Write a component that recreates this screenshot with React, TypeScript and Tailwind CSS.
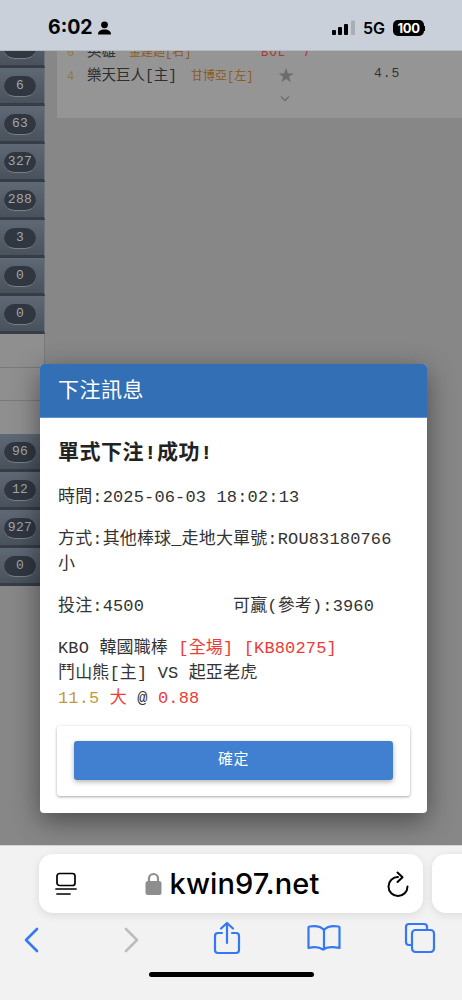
const mono = "font-['Liberation_Mono','Noto_Sans_CJK_TC',monospace]";

function Pill({ n }: { n: string }) {
  return (
    <div className="h-[38px] w-[45px] border-b-[3px] border-r border-b-[#363d46] border-r-[#6d747c] bg-gradient-to-b from-[#5f6975] to-[#49515c] pl-1 pt-2">
      <div className="flex h-[21px] w-8 items-center justify-center rounded-full border-b border-[#7b7f80] bg-[#303741] text-[13px] tracking-[0.3px] text-[#a2a6aa]">
        {n}
      </div>
    </div>
  );
}

function Signal() {
  return (
    <svg width="24" height="16" viewBox="0 0 24 16" className="-mr-px">
      <rect x="0" y="10" width="4" height="5" rx="1" fill="#000" />
      <rect x="6" y="7" width="4" height="8" rx="1" fill="#000" />
      <rect x="12" y="4" width="4" height="11" rx="1" fill="#000" />
      <rect x="19" y="0.5" width="4" height="14.5" rx="1" fill="#a9aeb5" />
    </svg>
  );
}

export default function App() {
  return (
    <div className={`relative h-[1000px] w-[462px] overflow-hidden bg-[#878787] ${mono}`}>
      <header className="relative z-10 flex h-[51px] items-center justify-between border-b border-[#b4b9bf] bg-[#c9d0d9] pl-[48px] pr-[37px] pt-[6px] font-['Inter',sans-serif] text-black">
        <div className="flex items-center gap-[5px]">
          <span className="text-[19.5px] font-bold leading-none">6:02</span>
          <svg width="13" height="14" viewBox="0 0 13 14" fill="#000">
            <circle cx="6.5" cy="3.8" r="3.4" />
            <path d="M0 13.5c0-3.4 2.6-5 6.5-5s6.5 1.6 6.5 5z" />
          </svg>
        </div>
        <div className="flex items-center gap-[8px]">
          <Signal />
          <span className="text-[16px] font-semibold leading-none">5G</span>
          <div className="flex items-center">
            <div className="flex h-[16px] w-[31px] items-center justify-center rounded-[5px] bg-black text-[13px] font-bold leading-none tracking-[-0.3px] text-white">100</div>
            <div className="h-[5px] w-[1px] bg-black" />
          </div>
        </div>
      </header>

      <main className="flex h-[794px] overflow-hidden">
        <aside className="-mt-[21px] w-[46px] shrink-0">
          {["14", "6", "63", "327", "288", "3", "0", "0"].map((n, i) => (
            <Pill key={i} n={n} />
          ))}
          <div className="h-[34px] w-[45px] border-b border-r border-[#7a7a7a] bg-[#8f8f8f]" />
          <div className="h-[33px] w-[45px] border-b border-r border-[#7a7a7a] bg-[#8f8f8f]" />
          <div className="h-[33px] w-[45px] border-r border-[#7a7a7a] bg-[#8f8f8f]" />
          {["96", "12", "927", "0"].map((n, i) => (
            <Pill key={i} n={n} />
          ))}
        </aside>
        <section className="ml-[11px] h-[67px] flex-1 bg-[#959595] pl-[10px] text-[14.5px] text-[#333]">
          <div className="-mt-[7px] flex h-[17px] items-center">
            <span className="w-[20px] text-[12px] text-[#8d7a3c]">0</span>
            <span className="w-[42px] whitespace-nowrap">英雄</span>
            <span className="w-[132px] whitespace-nowrap text-[12px] text-[#8c5a22]">金建廻[右]</span>
            <span className="whitespace-pre text-[12px] tracking-[1.2px] text-[#a33a36]">BOL  7</span>
          </div>
          <div className="mt-[4px] flex h-[23px] items-center">
            <span className="w-[20px] text-[12px] text-[#8d7a3c]">4</span>
            <span className="w-[104px] whitespace-nowrap text-[#2e2e2e]">樂天巨人[主]</span>
            <span className="w-[87px] whitespace-nowrap text-[12px] text-[#8c5a22]">甘博亞[左]</span>
            <span className="w-[96px] text-[16px] leading-none text-[#6c6c6c]">★</span>
            <span className="-mt-[5px] text-[13px] tracking-[1px] text-[#333]">4.5</span>
          </div>
          <div className="ml-[212px] mt-[7px]">
            <svg width="12" height="8" viewBox="0 0 12 8" fill="none" stroke="#6c6c6c" strokeWidth="1.3">
              <path d="M2 1.5l4 4 4-4" />
            </svg>
          </div>
        </section>
      </main>

      <div className="absolute left-[40px] top-[364px] h-[449px] w-[387px] overflow-hidden rounded-[4px] bg-white shadow-[0_8px_28px_rgba(0,0,0,0.45)]">
        <div className="flex h-[54px] items-center border-b border-[#5f93d4] bg-[#336fb4] pl-[18px] pt-[2px] text-[21px] tracking-[0.5px] text-white">下注訊息</div>
        <div className="px-[18px] pt-[21px] text-[17px] leading-[25px] tracking-[0.15px] text-[#333]">
          <div className="text-[21px] font-bold leading-[30px] tracking-[0.5px] text-[#222]">單式下注!成功!</div>
          <div className="mt-[16px]">時間:2025-06-03 18:02:13</div>
          <div className="mt-[17px] whitespace-pre-wrap">方式:其他棒球_走地大單號:ROU83180766<br />小</div>
          <div className="mt-[17px] flex">
            <span className="w-[175px]">投注:4500</span>
            <span>可贏(參考):3960</span>
          </div>
          <div className="mt-[17px] whitespace-nowrap">KBO 韓國職棒 <span className="text-[#ef3b36]">[全場] [KB80275]</span></div>
          <div className="whitespace-nowrap">鬥山熊[主] VS 起亞老虎</div>
          <div className="whitespace-nowrap">
            <span className="text-[#c19a3f]">11.5</span> <span className="text-[#ef3b36]">大</span> @ <span className="text-[#ef3b36]">0.88</span>
          </div>
          <div className="-mx-px mt-[15px] rounded-[3px] bg-white px-[17px] pb-[16px] pt-[15px] shadow-[0_1px_3px_rgba(0,0,0,0.35)]">
            <button className="flex h-[39px] w-full items-center justify-center rounded-[3px] bg-[#4180d0] pb-[2px] font-['Roboto','Noto_Sans_CJK_TC',sans-serif] text-[15px] tracking-[0.5px] text-white shadow-[0_2px_5px_rgba(0,0,0,0.3)]">確定</button>
          </div>
        </div>
      </div>

      <footer className="h-[155px] border-t border-[#d5d5d5] bg-[#f2f2f2] font-['Inter',sans-serif]">
        <div className="flex gap-[9px] pl-[39px] pt-[8px]">
          <div className="flex h-[59px] w-[384px] shrink-0 items-center rounded-[14px] bg-white pl-[16px] pr-[14px] shadow-[0_2px_8px_rgba(0,0,0,0.1)]">
            <svg width="22" height="24" viewBox="0 0 22 24" fill="none" stroke="#000" strokeWidth="1.7" strokeLinecap="round">
              <rect x="2" y="1.5" width="18" height="12" rx="2.5" />
              <path d="M1 17h20M2 22h13" />
            </svg>
            <div className="flex flex-1 items-center justify-center gap-[8px]">
              <svg width="17" height="23" viewBox="0 0 17 23" fill="none">
                <path d="M4 10V6.5a4.5 4.5 0 0 1 9 0V10" stroke="#8e8e8e" strokeWidth="2.2" />
                <rect x="0.5" y="9" width="16" height="14" rx="2.5" fill="#8e8e8e" />
              </svg>
              <span className="text-[29px] font-medium leading-none tracking-[0.1px] text-black">kwin97.net</span>
            </div>
            <svg width="22" height="26" viewBox="0 0 22 26" fill="none" stroke="#000" strokeWidth="2" strokeLinecap="round" strokeLinejoin="round">
              <path d="M11 6A9.5 9.5 0 1 0 20.5 15.5" />
              <path d="M10.5 1.5l5 4.7-5 4.8" />
            </svg>
          </div>
          <div className="h-[59px] w-[60px] shrink-0 rounded-[14px] bg-white shadow-[0_2px_8px_rgba(0,0,0,0.1)]" />
        </div>
        <nav className="relative mt-[8px] flex items-start pl-[23px]">
          <svg width="16" height="26" viewBox="0 0 16 26" fill="none" stroke="#3478f6" strokeWidth="2.6" strokeLinecap="round" strokeLinejoin="round" className="mt-[6px]">
            <path d="M14 2L3 13l11 11" />
          </svg>
          <svg width="16" height="26" viewBox="0 0 16 26" fill="none" stroke="#bdbdbd" strokeWidth="2.6" strokeLinecap="round" strokeLinejoin="round" className="ml-[85px] mt-[6px]">
            <path d="M2 2l11 11L2 24" />
          </svg>
          <svg width="28" height="34" viewBox="0 0 28 34" fill="none" stroke="#3478f6" strokeWidth="2.2" strokeLinecap="round" strokeLinejoin="round" className="ml-[73px]">
            <path d="M9 12H5a3 3 0 0 0-3 3v14a3 3 0 0 0 3 3h18a3 3 0 0 0 3-3V15a3 3 0 0 0-3-3h-4" />
            <path d="M14 22V2M8 7.5L14 2l6 5.5" />
          </svg>
          <svg width="34" height="28" viewBox="0 0 34 28" fill="none" stroke="#3478f6" strokeWidth="2.2" strokeLinecap="round" strokeLinejoin="round" className="ml-[66px] mt-[3px]">
            <path d="M17 6C14 2.5 9 1.5 2.5 2.5a1 1 0 0 0-1 1V24c6-1.5 11-1 14.5 1.5C19.5 23 25 22.5 32.5 24V3.5a1 1 0 0 0-1-1C25 1.5 20 2.5 17 6zM17 6v19.5" />
          </svg>
          <svg width="32" height="32" viewBox="0 0 32 32" fill="none" stroke="#3478f6" strokeWidth="2.2" strokeLinejoin="round" className="ml-[63px] mt-[1px]">
            <path d="M7 23H5a3 3 0 0 1-3-3V5a3 3 0 0 1 3-3h15a3 3 0 0 1 3 3v2" />
            <rect x="8" y="8" width="22" height="22" rx="3.5" />
          </svg>
        </nav>
        <div className="mx-auto mt-[17px] h-[5px] w-[165px] rounded-full bg-black" />
      </footer>
    </div>
  );
}
